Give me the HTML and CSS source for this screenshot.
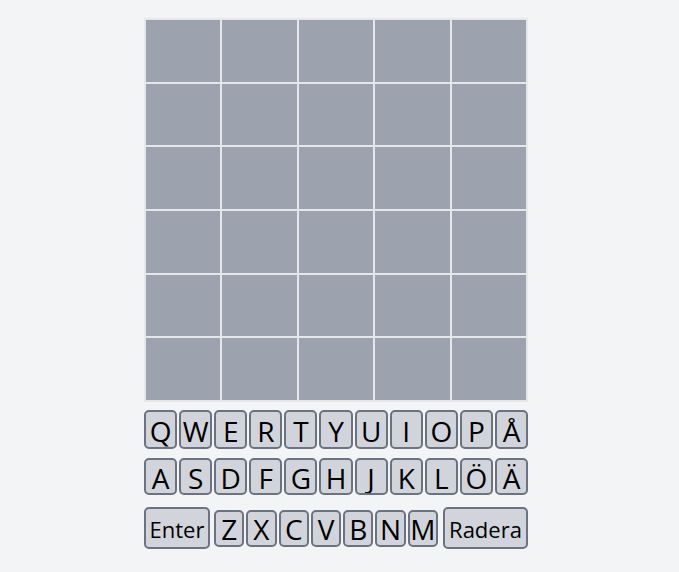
FILE: index.html
```html
<!DOCTYPE html>
<html lang="sv">
<head>
<meta charset="utf-8">
<title>Ordspel</title>
<link rel="stylesheet" href="styles.css">
</head>
<body>
<main class="app">
  <div class="board">
    <div class="cell"></div><div class="cell"></div><div class="cell"></div><div class="cell"></div><div class="cell"></div>
    <div class="cell"></div><div class="cell"></div><div class="cell"></div><div class="cell"></div><div class="cell"></div>
    <div class="cell"></div><div class="cell"></div><div class="cell"></div><div class="cell"></div><div class="cell"></div>
    <div class="cell"></div><div class="cell"></div><div class="cell"></div><div class="cell"></div><div class="cell"></div>
    <div class="cell"></div><div class="cell"></div><div class="cell"></div><div class="cell"></div><div class="cell"></div>
    <div class="cell"></div><div class="cell"></div><div class="cell"></div><div class="cell"></div><div class="cell"></div>
  </div>
  <div class="keyboard">
    <div class="key-row row-top">
      <button class="key">Q</button><button class="key">W</button><button class="key">E</button><button class="key">R</button><button class="key">T</button><button class="key">Y</button><button class="key">U</button><button class="key">I</button><button class="key">O</button><button class="key">P</button><button class="key">Å</button>
    </div>
    <div class="key-row row-mid">
      <button class="key">A</button><button class="key">S</button><button class="key">D</button><button class="key">F</button><button class="key">G</button><button class="key">H</button><button class="key">J</button><button class="key">K</button><button class="key">L</button><button class="key">Ö</button><button class="key">Ä</button>
    </div>
    <div class="key-row row-bottom">
      <button class="key key-wide key-enter">Enter</button><button class="key">Z</button><button class="key">X</button><button class="key">C</button><button class="key">V</button><button class="key">B</button><button class="key">N</button><button class="key">M</button><button class="key key-wide key-delete">Radera</button>
    </div>
  </div>
</main>
</body>
</html>
```
FILE: styles.css
```css
html, body {
  margin: 0;
  padding: 0;
  background: #f3f4f6;
}

body {
  font-family: "Open Sans", "Noto Sans", "Liberation Sans", sans-serif;
  color: #000;
}

.app {
  display: flex;
  flex-direction: column;
  align-items: center;
  padding: 18px 7px 0 0;
}

.board {
  width: 384px;
  height: 384px;
  box-sizing: border-box;
  padding: 2px;
  gap: 2px;
  background: #e5e7eb;
  display: grid;
  grid-template-columns: repeat(5, 1fr);
  grid-template-rows: repeat(6, 1fr);
}

.cell {
  background: #9ca3af;
}

.keyboard {
  width: 384px;
  margin-top: 8px;
  display: flex;
  flex-direction: column;
}

.key-row {
  display: flex;
  gap: 2px;
  align-items: center;
}

.row-top {
  height: 39px;
}

.row-mid {
  height: 37px;
  margin-top: 9px;
}

.row-bottom {
  height: 42px;
  margin-top: 12px;
}

.key {
  flex: 1 1 0;
  min-width: 0;
  height: 100%;
  box-sizing: border-box;
  margin: 0;
  padding: 2px 0 0;
  background: #d1d5db;
  border: 2px solid #6b7280;
  border-radius: 5px;
  font-family: inherit;
  font-size: 28px;
  line-height: 1;
  color: #000;
  display: flex;
  align-items: center;
  justify-content: center;
  overflow: hidden;
}

.row-bottom .key {
  height: 37px;
}

.row-bottom .key-wide {
  flex: 0 0 auto;
  height: 42px;
  font-size: 22px;
}

.key-enter {
  width: 66px;
  margin-right: 2px;
}

.key-delete {
  width: 85px;
  margin-left: 3px;
}
```
